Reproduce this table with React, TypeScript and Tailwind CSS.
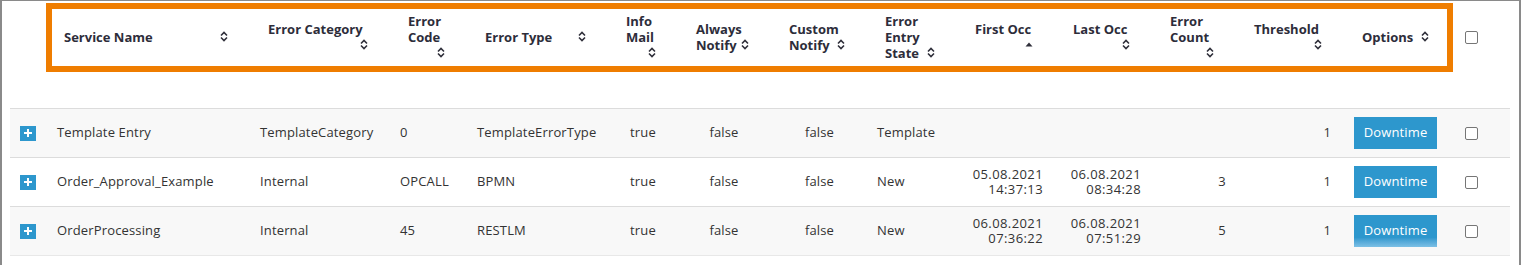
import React from "react";

const SortIcon = () => (
  <svg width="8" height="11" viewBox="0 0 8 11" className="shrink-0 block">
    <polyline points="1,4.5 4,1.5 7,4.5" fill="none" stroke="#2f2f3a" strokeWidth="1.6" />
    <polyline points="1,6.5 4,9.5 7,6.5" fill="none" stroke="#2f2f3a" strokeWidth="1.6" />
  </svg>
);

const AscIcon = () => (
  <svg width="8" height="5" viewBox="0 0 8 5" className="shrink-0 block">
    <polygon points="0.5,4.5 4,0.5 7.5,4.5" fill="#2f2f3a" />
  </svg>
);

type Head = { lines: string[]; own: boolean; asc?: boolean };

const heads: Head[] = [
  { lines: ["Service Name"], own: false },
  { lines: ["Error Category"], own: true },
  { lines: ["Error", "Code"], own: true },
  { lines: ["Error Type"], own: false },
  { lines: ["Info", "Mail"], own: true },
  { lines: ["Always", "Notify"], own: false },
  { lines: ["Custom", "Notify"], own: false },
  { lines: ["Error", "Entry", "State"], own: false },
  { lines: ["First Occ"], own: true, asc: true },
  { lines: ["Last Occ"], own: true },
  { lines: ["Error", "Count"], own: true },
  { lines: ["Threshold"], own: true },
  { lines: ["Options"], own: false },
];

const HeadCell = ({ h }: { h: Head }) => {
  const icon = h.asc ? <AscIcon /> : <SortIcon />;
  const last = h.lines.length - 1;
  return (
    <div className="flex flex-col justify-center leading-[16px]">
      {h.lines.map((l, i) =>
        i === last && !h.own ? (
          <div key={i} className="flex items-center justify-between h-[16px] whitespace-nowrap">
            <span>{l}</span>
            {icon}
          </div>
        ) : (
          <div key={i} className="h-[16px] whitespace-nowrap">
            {l}
          </div>
        )
      )}
      {h.own && <div className="flex items-center justify-end h-[16px]">{icon}</div>}
    </div>
  );
};

const Checkbox = () => (
  <div className="w-[13px] h-[13px] border border-[#767676] rounded-[2px] bg-white" />
);

const Plus = () => (
  <div className="w-[16px] h-[15px] bg-[#2d97cd] flex items-center justify-center">
    <svg width="8" height="8" viewBox="0 0 8 8">
      <rect x="3" y="0" width="2" height="8" fill="#fff" />
      <rect x="0" y="3" width="8" height="2" fill="#fff" />
    </svg>
  </div>
);

type Row = {
  name: string;
  cat: string;
  code: string;
  type: string;
  info: string;
  always: string;
  custom: string;
  state: string;
  first?: [string, string];
  last?: [string, string];
  count: string;
  thr: string;
  bg: string;
  grad?: boolean;
};

const rows: Row[] = [
  {
    name: "Template Entry",
    cat: "TemplateCategory",
    code: "0",
    type: "TemplateErrorType",
    info: "true",
    always: "false",
    custom: "false",
    state: "Template",
    count: "",
    thr: "1",
    bg: "bg-[#f8f8f8]",
  },
  {
    name: "Order_Approval_Example",
    cat: "Internal",
    code: "OPCALL",
    type: "BPMN",
    info: "true",
    always: "false",
    custom: "false",
    state: "New",
    first: ["05.08.2021", "14:37:13"],
    last: ["06.08.2021", "08:34:28"],
    count: "3",
    thr: "1",
    bg: "bg-white",
  },
  {
    name: "OrderProcessing",
    cat: "Internal",
    code: "45",
    type: "RESTLM",
    info: "true",
    always: "false",
    custom: "false",
    state: "New",
    first: ["06.08.2021", "07:36:22"],
    last: ["06.08.2021", "07:51:29"],
    count: "5",
    thr: "1",
    bg: "bg-[#f8f8f8]",
    grad: true,
  },
];

export default function App() {
  return (
    <div
      className="w-[1521px] h-[265px] bg-white border-l-2 border-t border-r-2 border-[#8a8a8a] text-[13px] text-[#333]"
      style={{ fontFamily: '"Open Sans", "Liberation Sans", sans-serif' }}
    >
      <div className="flex items-center mt-[2px] ml-[44px]">
        <div className="w-[1407px] h-[69px] border-[6px] border-[#ef7d00] flex items-center pb-[2px]">
          <div className="grid grid-cols-[164px_100px_37px_101px_30px_53px_56px_50px_58px_57px_44px_68px_67px] gap-x-[40px] pl-[12px] font-bold text-[#2d2d3a] items-center h-full">
            {heads.map((h, i) => (
              <HeadCell key={i} h={h} />
            ))}
          </div>
        </div>
        <div className="ml-[12px]">
          <Checkbox />
        </div>
      </div>

      <div className="mt-[36px] ml-[8px] w-[1500px] border-b border-[#e8e8e8] tracking-[0.15px]">
        {rows.map((r, i) => (
          <div
            key={i}
            className={`grid grid-cols-[37px_203px_140px_77px_143px_66px_96px_95px_88px_98px_98px_142px_48px_109px_60px] h-[49px] items-center border-t border-[#dcdcdc] ${r.bg}`}
          >
            <div className="pl-[10px]">
              <Plus />
            </div>
            <div className="pl-[10px] whitespace-nowrap">{r.name}</div>
            <div className="pl-[10px] whitespace-nowrap">{r.cat}</div>
            <div className="pl-[10px] whitespace-nowrap">{r.code}</div>
            <div className="pl-[10px] whitespace-nowrap">{r.type}</div>
            <div className="text-center">{r.info}</div>
            <div className="text-center">{r.always}</div>
            <div className="text-center">{r.custom}</div>
            <div className="pl-[10px]">{r.state}</div>
            <div className="pr-[10px] text-right leading-[15px] tracking-[0.4px]">
              {r.first && (
                <>
                  <div>{r.first[0]}</div>
                  <div>{r.first[1]}</div>
                </>
              )}
            </div>
            <div className="pr-[10px] text-right leading-[15px] tracking-[0.4px]">
              {r.last && (
                <>
                  <div>{r.last[0]}</div>
                  <div>{r.last[1]}</div>
                </>
              )}
            </div>
            <div className="text-center">{r.count}</div>
            <div className="pr-[10px] text-right">{r.thr}</div>
            <div className="pl-[13px]">
              <div
                className={`w-[83px] h-[32px] flex items-center justify-center text-white ${
                  r.grad
                    ? "bg-linear-to-b from-[#2d97cd] from-70% to-[#7cc0e6]"
                    : "bg-[#2d97cd]"
                }`}
              >
                Downtime
              </div>
            </div>
            <div className="pl-[15px]">
              <Checkbox />
            </div>
          </div>
        ))}
      </div>
    </div>
  );
}
